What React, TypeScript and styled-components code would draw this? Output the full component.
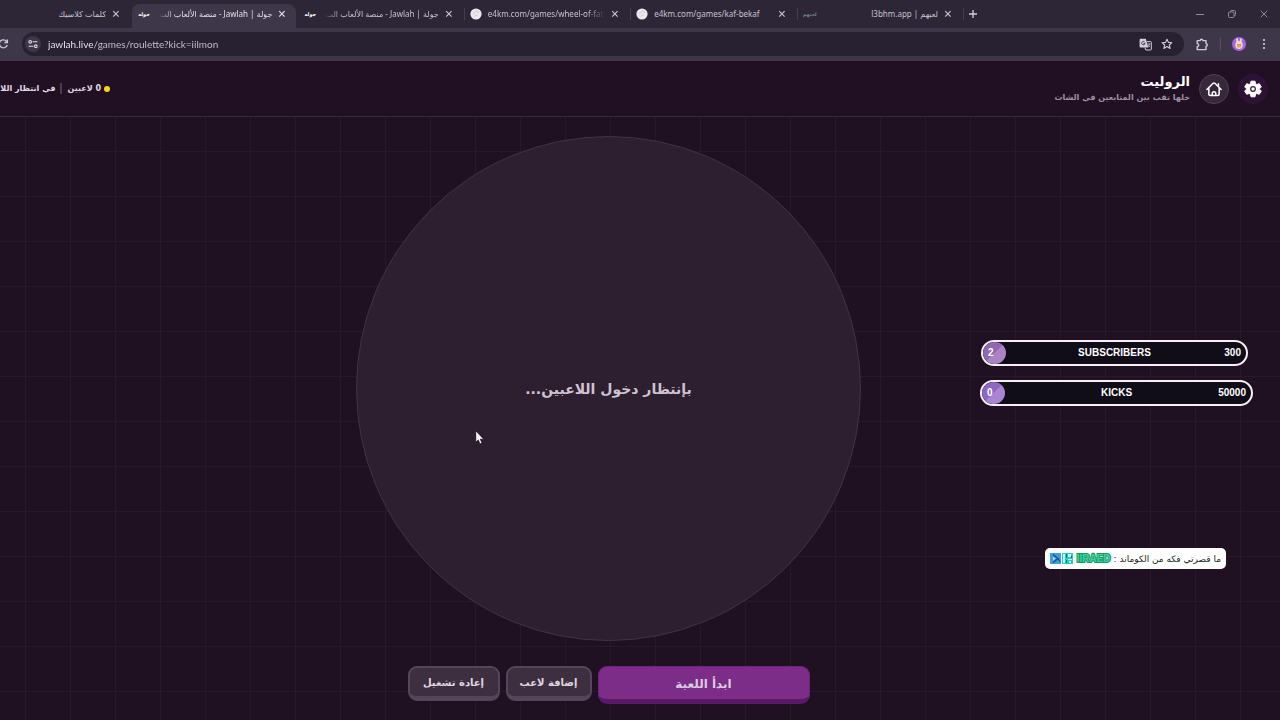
import React from "react";
import styled, { createGlobalStyle, css } from "styled-components";

const Global = createGlobalStyle`
  * { box-sizing: border-box; }
  html, body, #root { height: 100%; }
  body {
    margin: 0;
    overflow: hidden;
    background: #1f1022;
    font-family: Lato, "DejaVu Sans", sans-serif;
  }
  button, input { font: inherit; margin: 0; padding: 0; border: 0; background: none; color: inherit; }
`;

const Shell = styled.div`
  display: flex;
  flex-direction: column;
  min-height: 100vh;
  overflow: hidden;
`;

/* ---------- browser window ---------- */

const TabStrip = styled.div`
  display: flex;
  height: 28px;
  background: #2d2636;
  color: #c8c1cf;
`;

const TabGroup = styled.div`
  display: flex;
  width: 65%;
`;

const Tab = styled.div<{ $active?: boolean; $cut?: boolean; $line?: boolean }>`
  position: relative;
  display: flex;
  align-items: center;
  gap: 6px;
  min-width: 0;
  flex: ${(p) => (p.$cut ? "0 0 132px" : "1 1 0")};
  margin-top: 4px;
  padding: 0 12px 8px 5px;
  height: 28px;
  ${(p) =>
    p.$active &&
    css`
      margin-right: 2px;
      padding-right: 10px;
      background: #3e374a;
      color: #e4deea;
      border-radius: 8px 8px 0 0;
    `}
  ${(p) =>
    p.$line &&
    css`
      &::after {
        content: "";
        position: absolute;
        right: 0;
        top: 4px;
        width: 1px;
        height: 12px;
        background: #453d50;
      }
    `}
`;

const TabTitle = styled.span<{ $rtl?: boolean; $fade?: boolean }>`
  flex: 1;
  min-width: 0;
  overflow: hidden;
  white-space: nowrap;
  font-family: "Noto Sans", "DejaVu Sans", sans-serif;
  font-size: 8px;
  line-height: 16px;
  direction: ${(p) => (p.$rtl ? "rtl" : "ltr")};
  ${(p) =>
    p.$fade &&
    css`
      mask-image: linear-gradient(${p.$rtl ? "to right" : "to left"}, transparent, #000 18px);
    `}
`;

const IconButton = styled.button<{ $w: number }>`
  display: flex;
  flex: none;
  align-items: center;
  justify-content: center;
  width: ${(p) => p.$w}px;
  height: 16px;
`;

const NewTabButton = styled(IconButton)`
  height: 28px;
`;

const WordFavicon = styled.span<{ $dim?: boolean }>`
  width: 14px;
  flex: none;
  font-family: "DejaVu Sans", sans-serif;
  font-size: 5px;
  font-weight: 700;
  line-height: 12px;
  text-align: center;
  color: ${(p) => (p.$dim ? "#6d8088" : "#fff")};
`;

const WindowControls = styled.div`
  display: flex;
  margin-left: auto;
  align-items: center;
  gap: 16px;
  padding-right: 8px;
  color: #8f8898;
`;

const Toolbar = styled.div`
  display: flex;
  height: 33px;
  align-items: center;
  gap: 11px;
  padding: 0 9px 1px 0;
  background: #3e374a;
  color: #cfc8d6;
`;

const Omnibox = styled.div`
  display: flex;
  flex: 1;
  align-items: center;
  height: 24px;
  padding: 0 9px 0 3px;
  gap: 7px;
  border-radius: 12px;
  background: #282132;
`;

const SiteInfo = styled.button`
  display: flex;
  width: 16px;
  height: 16px;
  align-items: center;
  justify-content: center;
  border-radius: 50%;
  background: #3e374a;
`;

const Address = styled.input`
  flex: 1;
  min-width: 0;
  font-size: 10px;
  line-height: 16px;
  outline: 0;
  color: transparent;
  background: linear-gradient(to right, #f6f2fa 46px, #cdc6d4 46px);
  background-clip: text;
`;

const ToolDivider = styled.span`
  width: 1px;
  height: 12px;
  background: #574f62;
`;

/* ---------- game page ---------- */

const Page = styled.div`
  display: flex;
  flex: 1;
  flex-direction: column;
  direction: rtl;
  background-color: #1f1022;
  background-image:
    linear-gradient(to right, #29182c 1px, transparent 1px),
    linear-gradient(to bottom, #29182c 1px, transparent 1px);
  background-size: 45px 45px;
  background-position: 25px 0;
  font-family: "DejaVu Sans", sans-serif;
`;

const Header = styled.header`
  display: flex;
  align-items: center;
  justify-content: space-between;
  height: 56px;
  padding-right: 12px;
  background: #211023;
  border-bottom: 1px solid #382a3b;
`;

const Brand = styled.div`
  display: flex;
  align-items: center;
  gap: 9px;
`;

const RoundButton = styled.button<{ $home?: boolean }>`
  display: flex;
  align-items: center;
  justify-content: center;
  width: 30px;
  height: 30px;
  border-radius: 50%;
  color: #fff;
  background: ${(p) => (p.$home ? "#36273a" : "#2d1236")};
  border: 1px solid ${(p) => (p.$home ? "#504255" : "#30153b")};
`;

const Title = styled.h1`
  margin: 0;
  font-size: 13px;
  line-height: 18px;
  font-weight: 700;
  color: #fff;
`;

const Subtitle = styled.p`
  margin: 0;
  font-size: 8px;
  line-height: 14px;
  font-weight: 700;
  color: #9d8fa3;
`;

const Status = styled.div`
  display: flex;
  align-items: center;
  gap: 3px;
  width: 110px;
  white-space: nowrap;
  font-size: 8px;
  line-height: 16px;
  font-weight: 700;
  color: #e2dae5;
`;

const Dot = styled.span`
  flex: none;
  width: 6px;
  height: 6px;
  border-radius: 50%;
  background: #fbd50b;
`;

const Bar = styled.span`
  flex: none;
  width: 2px;
  height: 11px;
  margin: 0 2px;
  background: #4b3d4f;
`;

const Main = styled.main`
  display: flex;
  flex-direction: column;
  align-items: center;
  gap: 25px;
  padding: 19px 63px 16px 0;
`;

const Wheel = styled.section`
  display: flex;
  align-items: center;
  justify-content: center;
  width: min(505px, 90vw);
  aspect-ratio: 1;
  border: 1px solid #413244;
  border-radius: 50%;
  background: #2d1e30;
`;

const WaitText = styled.p`
  margin: 0;
  font-size: 14px;
  line-height: 24px;
  font-weight: 700;
  color: #cfc3d2;
`;

const Actions = styled.div`
  display: flex;
  align-items: flex-start;
  gap: 6px;
`;

const GhostButton = styled.button<{ $w: number }>`
  width: ${(p) => p.$w}px;
  height: 35px;
  border: 2px solid #54455a;
  border-bottom: 5px solid #54455a;
  border-radius: 9px;
  background: #3d2e40;
  color: #e0d7e2;
  font-size: 10px;
  font-weight: 700;
`;

const StartButton = styled.button`
  width: 212px;
  height: 38px;
  padding-top: 2px;
  border: 1px solid #6b2479;
  border-bottom: 5px solid #59196a;
  border-radius: 9px;
  background: #7b2d87;
  color: #dccbe0;
  font-size: 12px;
  font-weight: 700;
`;

/* ---------- stream overlay ---------- */

const Overlay = styled.aside`
  position: absolute;
  top: 340px;
  right: 27px;
  display: flex;
  flex-direction: column;
  align-items: flex-end;
`;

const Goal = styled.div<{ $w: number; $mr?: number }>`
  position: relative;
  display: flex;
  align-items: center;
  justify-content: space-between;
  width: ${(p) => p.$w}px;
  height: 26px;
  margin: 0 ${(p) => p.$mr || 0}px 14px 0;
  padding: 0 5px 0 0;
  border: 2px solid #f4f0f5;
  border-radius: 13px;
  background: #100c18;
  color: #fff;
  font: 700 10px/16px "Liberation Sans", sans-serif;
  overflow: hidden;
`;

const GoalFill = styled.span<{ $tone: string; $edge: string }>`
  display: flex;
  align-items: center;
  width: 23px;
  height: 22px;
  padding-left: 5px;
  border-radius: 11px;
  background: linear-gradient(135deg, ${(p) => p.$edge} 50%, ${(p) => p.$tone} 50%);
`;

const GoalName = styled.span`
  position: absolute;
  inset: 3px 0 auto 0;
  text-align: center;
`;

const Chat = styled.div`
  display: flex;
  direction: rtl;
  align-items: center;
  gap: 3px;
  width: 181px;
  height: 21px;
  margin: 128px 27px 0 0;
  padding: 0 5px;
  border-radius: 5px;
  background: #fff;
  color: #1d1d1d;
  font: 9px/16px "DejaVu Sans", sans-serif;
  white-space: nowrap;
`;

const ChatName = styled.b`
  font: 700 10px/16px "Liberation Sans", sans-serif;
  color: #3fd39a;
  -webkit-text-stroke: 2px #14996a;
  paint-order: stroke fill;
`;

const Badges = styled.span`
  display: flex;
  gap: 1px;
  margin-right: auto;
`;

const Pointer = styled.svg`
  position: absolute;
  left: 475px;
  top: 430px;
`;

const FaviconSvg = styled.svg`
  flex: none;
`;

const CloseIcon = () => (
  <svg width="8" height="8" viewBox="0 0 8 8" stroke="currentColor" strokeWidth="1.2" fill="none">
    <path d="M1.2 1.2l5.4 5.4M6.6 1.2L1.2 6.6" />
  </svg>
);

const GlobeFavicon = () => (
  <FaviconSvg width="12" height="12" viewBox="0 0 12 12">
    <circle cx="6" cy="6" r="5.6" fill="#ece9ee" />
    <path d="M3 5h2M7 4.2h2M5.5 7.2h2M6 2v2M3.6 7.6l1 1" stroke="#bcb6c2" strokeWidth=".8" />
  </FaviconSvg>
);

type TabInfo = { title: string; rtl?: boolean; fade?: boolean; icon: "word" | "dim" | "globe"; active?: boolean; line?: boolean };

const tabs: TabInfo[] = [
  { title: "جولة | Jawlah - منصة الألعاب الت", rtl: true, fade: true, icon: "word", active: true },
  { title: "جولة | Jawlah - منصة الألعاب الت", rtl: true, fade: true, icon: "word", line: true },
  { title: "e4km.com/games/wheel-of-fate", fade: true, icon: "globe", line: true },
  { title: "e4km.com/games/kaf-bekaf", icon: "globe", line: true },
  { title: "لعبهم | l3bhm.app", rtl: true, icon: "dim", line: true },
];

const favicon = (kind: TabInfo["icon"]) =>
  kind === "globe" ? (
    <GlobeFavicon />
  ) : (
    <WordFavicon $dim={kind === "dim"}>{kind === "dim" ? "لعبهم" : "جوله"}</WordFavicon>
  );

export default function App() {
  return (
    <Shell>
      <Global />
      <TabStrip>
        <Tab $cut>
          <TabTitle $rtl>كلمات كلاسيك</TabTitle>
          <IconButton $w={8} aria-label="Close tab"><CloseIcon /></IconButton>
        </Tab>
        <TabGroup>
          {tabs.map((t, i) => (
            <Tab key={i} $active={t.active} $line={t.line}>
              {favicon(t.icon)}
              <TabTitle $rtl={t.rtl} $fade={t.fade}>{t.title}</TabTitle>
              <IconButton $w={8} aria-label="Close tab"><CloseIcon /></IconButton>
            </Tab>
          ))}
        </TabGroup>
        <NewTabButton $w={18} aria-label="New tab">
          <svg width="10" height="10" viewBox="0 0 10 10" stroke="#d5cfdb" strokeWidth="1.3">
            <path d="M5 1v8M1 5h8" />
          </svg>
        </NewTabButton>
        <WindowControls>
          <IconButton $w={16} aria-label="Minimize">
            <svg width="8" height="8" stroke="currentColor"><path d="M0 4.5h8" /></svg>
          </IconButton>
          <IconButton $w={16} aria-label="Restore">
            <svg width="8" height="8" viewBox="0 0 8 8" stroke="currentColor" fill="none">
              <rect x=".5" y="2" width="5.5" height="5.5" rx="1" />
              <path d="M2.3 2V1.5q0-1 1-1h3.2q1 0 1 1v3.2q0 1-1 1H6" />
            </svg>
          </IconButton>
          <IconButton $w={16} aria-label="Close window">
            <svg width="8" height="8" viewBox="0 0 8 8" stroke="currentColor"><path d="M.7.7l6.6 6.6M7.3.7L.7 7.3" /></svg>
          </IconButton>
        </WindowControls>
      </TabStrip>

      <Toolbar>
        <IconButton $w={11} aria-label="Reload">
          <svg width="11" height="12" viewBox="0 0 11 12" fill="none" stroke="currentColor" strokeWidth="1.3">
            <path d="M6.6 3.4A4 4 0 1 0 7.2 7M7.4 1.5v3H4.4" />
          </svg>
        </IconButton>
        <Omnibox>
          <SiteInfo aria-label="Site information">
            <svg width="10" height="10" viewBox="0 0 10 10" fill="none" stroke="#e0dae6" strokeWidth="1.1">
              <path d="M4.6 2.8H9.4M.6 7.2H5.4" />
              <circle cx="2.2" cy="2.8" r="1.3" />
              <circle cx="7.8" cy="7.2" r="1.3" />
            </svg>
          </SiteInfo>
          <Address aria-label="Address" defaultValue="jawlah.live/games/roulette?kick=iilmon" />
          <IconButton $w={14} aria-label="Translate">
            <svg width="13" height="13" viewBox="0 0 13 13">
              <path d="M1.5.8h5.3l2.6 8.7H1.5a.9.9 0 0 1-.9-.9V1.7a.9.9 0 0 1 .9-.9z" fill="#d5cedb" />
              <path d="M8 3.6h3.6q.7 0 .7.7v7q0 .7-.7.7H6.8L5.9 9.7" fill="none" stroke="#d5cedb" />
              <path d="M5.9 4.4A1.7 1.7 0 1 0 6 5.6H4.5" fill="none" stroke="#3a3244" strokeWidth=".9" />
              <path d="M8.6 6h2.8M10 5.2V6M10.8 6q-.6 2-2 2.8M9.4 7.2l1.6 2" fill="none" stroke="#d5cedb" strokeWidth=".7" />
            </svg>
          </IconButton>
          <IconButton $w={16} aria-label="Bookmark">
            <svg width="12" height="12" viewBox="0 0 12 12" fill="none" stroke="#d5cedb" strokeWidth="1.1" strokeLinejoin="round">
              <path d="M6 1.2l1.4 3.2 3.5.3-2.6 2.3.8 3.4L6 8.6l-3.1 1.8.8-3.4L1.1 4.7l3.5-.3z" />
            </svg>
          </IconButton>
        </Omnibox>
        <IconButton $w={14} aria-label="Extensions">
          <svg width="13" height="13" viewBox="0 0 13 13" fill="none" stroke="currentColor" strokeWidth="1.4" strokeLinejoin="round">
            <path d="M1.2 2.6H4.2A1.3 1.3 0 0 1 6.8 2.6H10V5.6A1.3 1.3 0 0 1 10 8.2V11.6H1.2V8.6A1.5 1.5 0 0 0 1.2 5.6z" />
          </svg>
        </IconButton>
        <ToolDivider />
        <IconButton $w={14} aria-label="Profile">
          <svg width="14" height="14" viewBox="0 0 14 14">
            <circle cx="7" cy="7" r="7" fill="#a366e0" />
            <path d="M4.3 1.5q1-.8 1.6.3l.5 2.4h1.3l.5-2.4q.7-1.1 1.5-.3L9.7 5q1.3 1.2 1 4-.4 3-3.7 3T3.3 9q-.2-2.8 1-4z" fill="#f3d9c4" />
            <path d="M4.8 8.2q2.2-2.4 4.4 0v2.4H4.8z" fill="#e7a95f" />
            <path d="M5.8 7.2v1M8.3 7.2v1" stroke="#69412c" strokeWidth=".8" />
          </svg>
        </IconButton>
        <IconButton $w={14} aria-label="Menu">
          <svg width="4" height="12" viewBox="0 0 4 12" fill="#d5cedb">
            <circle cx="2" cy="2" r="1.1" /><circle cx="2" cy="6" r="1.1" /><circle cx="2" cy="10" r="1.1" />
          </svg>
        </IconButton>
      </Toolbar>

      <Page lang="ar">
        <Header>
          <Brand>
            <RoundButton aria-label="الإعدادات">
              <svg width="18" height="18" viewBox="0 0 18 18">
                <path
                  d="M7 1.2h4l.6 2.6 1.2.7 2.500-.8 2 3.400-1.900 1.500v.8l1.900 1.500-2 3.400-2.500-.8-1.200.7-.6 2.600H7l-.6-2.600-1.200-.7-2.500.8-2-3.400 1.900-1.500v-.8L.7 7.100l2-3.400 2.500.8 1.200-.7z"
                  fill="#fff" stroke="#fff" strokeWidth="1" strokeLinejoin="round"
                />
                <circle cx="9" cy="9" r="2.3" fill="#fff" stroke="#32133f" strokeWidth="1.2" />
              </svg>
            </RoundButton>
            <RoundButton $home aria-label="الرئيسية">
              <svg width="16" height="16" viewBox="0 0 18 18" fill="none" stroke="#fff" strokeWidth="1.7" strokeLinecap="round" strokeLinejoin="round">
                <path d="M1 9.500L7.700 2.800q1.300-1.200 2.600 0L17 9.500M3.200 7.800v6.500q0 2 2 2h7.600q2 0 2-2V7.800M14 6V3.200" />
                <path d="M7 16v-2a2 2 0 0 1 4 0v2" />
              </svg>
            </RoundButton>
            <div>
              <Title>الروليت</Title>
              <Subtitle>خلها تقب بين المتابعين في الشات</Subtitle>
            </div>
          </Brand>
          <Status>
            <Dot />
            <span>0 لاعبين</span>
            <Bar />
            <span>في انتظار اللاعبين</span>
          </Status>
        </Header>
        <Main>
          <Wheel>
            <WaitText>بإنتظار دخول اللاعبين...</WaitText>
          </Wheel>
          <Actions>
            <StartButton>ابدأ اللعبة</StartButton>
            <GhostButton $w={86}>إضافة لاعب</GhostButton>
            <GhostButton $w={92}>إعادة تشغيل</GhostButton>
          </Actions>
        </Main>
      </Page>

      <Overlay>
        <Goal $w={267} $mr={5}>
          <GoalFill $tone="#ab84c4" $edge="#9268b2">2</GoalFill>
          <GoalName>SUBSCRIBERS</GoalName>
          <span>300</span>
        </Goal>
        <Goal $w={273}>
          <GoalFill $tone="#a984d2" $edge="#8f66c4">0</GoalFill>
          <GoalName>KICKS</GoalName>
          <span>50000</span>
        </Goal>
        <Chat>
          <span>ما قصرتي فكه من الكوماند :</span>
          <ChatName>IIRAED</ChatName>
          <Badges>
            <svg width="11" height="11" viewBox="0 0 11 11">
              <rect width="11" height="11" fill="#19d3c5" />
              <path d="M1 1h2v9H1zM6 1h3v3H6zM6 6h4v1H6zM7 8h2v2H7z" fill="#d8fffb" />
              <path d="M4 1h1v4H4zM4 7h1v3H4zM9 3h1v2H9z" fill="#0b6f77" />
            </svg>
            <svg width="11" height="11" viewBox="0 0 11 11">
              <rect width="11" height="11" fill="#3d9fe0" />
              <path d="M3 1.500l5 4-5 4M8 5.500l2 3" fill="none" stroke="#174a83" strokeWidth="1.2" />
              <path d="M3 4l2.500 1.500L3 7.500z" fill="#b8e2ff" />
            </svg>
          </Badges>
        </Chat>
      </Overlay>

      <Pointer width="10" height="15" viewBox="0 0 10 15">
        <path d="M.8.8v11.4l2.5-2.3 1.7 4 2-.9-1.7-3.8h3.4z" fill="#fff" stroke="#150a18" strokeWidth=".7" />
      </Pointer>
    </Shell>
  );
}
